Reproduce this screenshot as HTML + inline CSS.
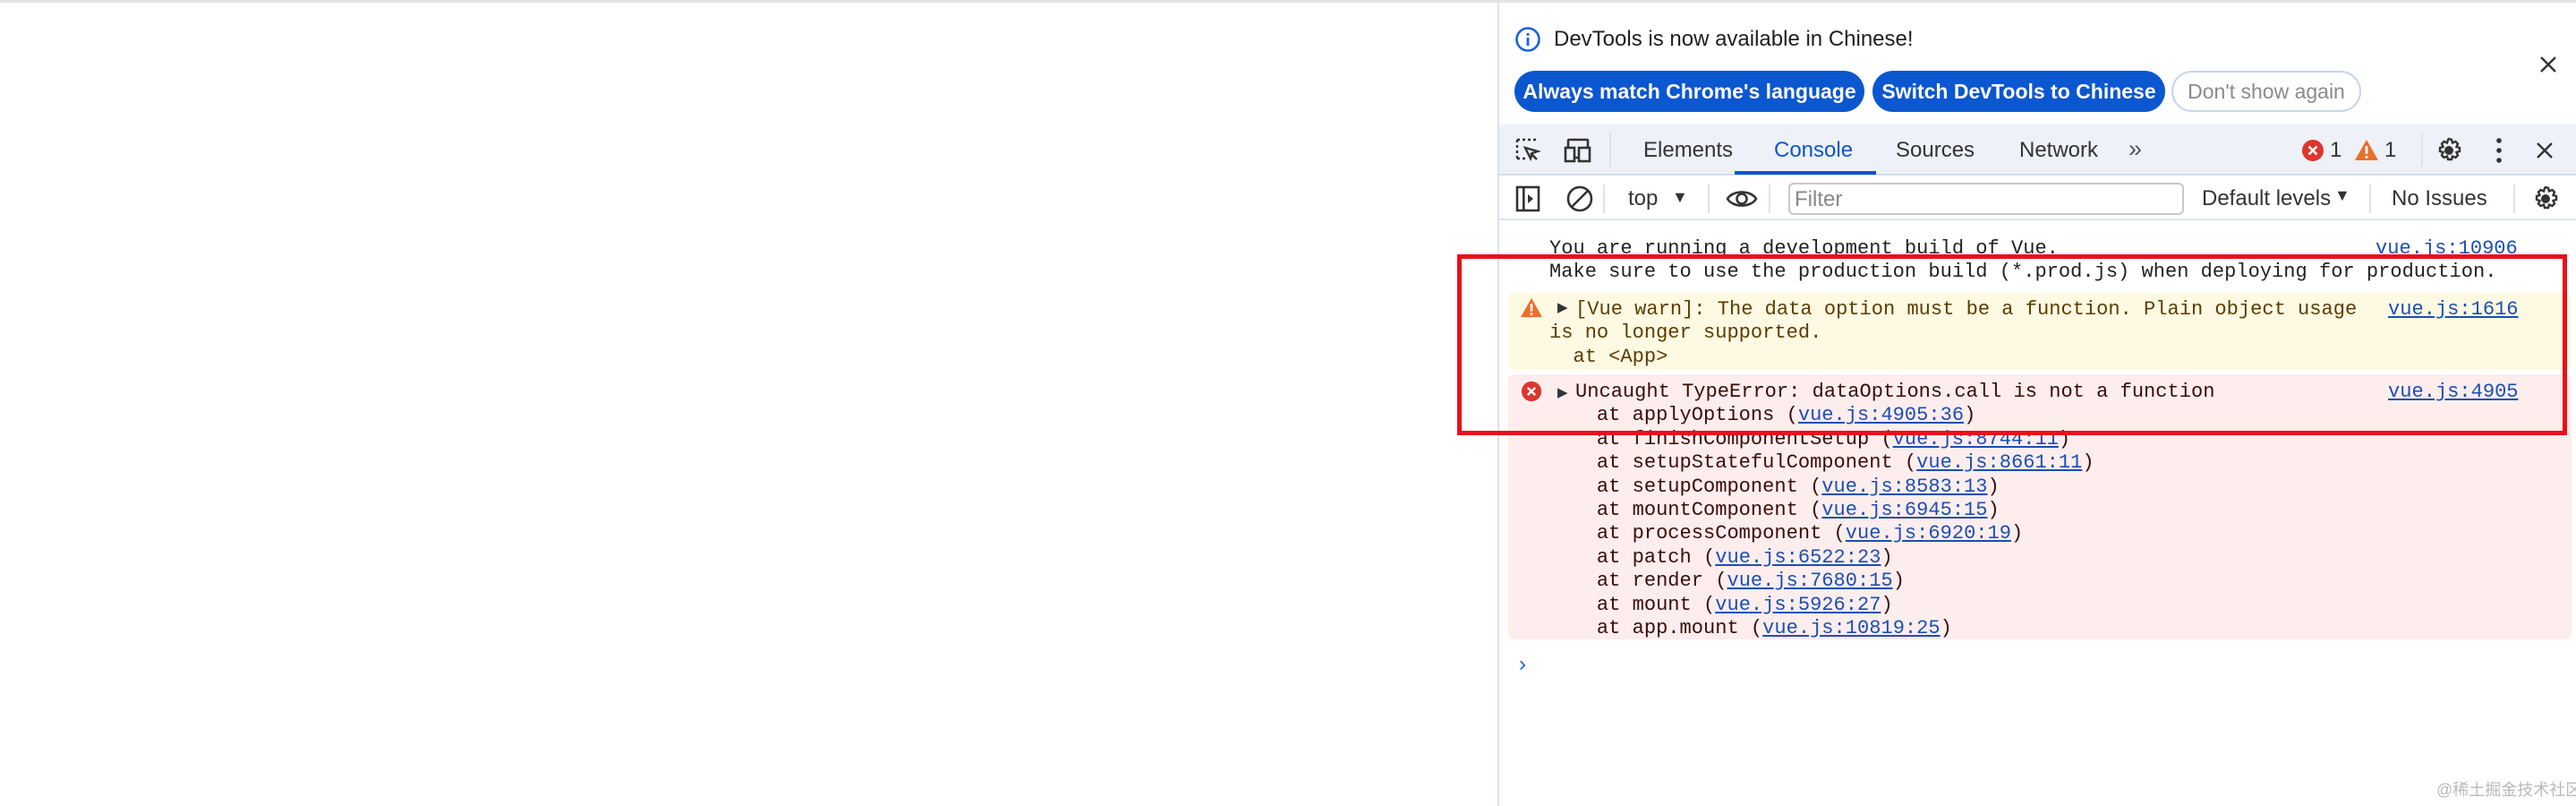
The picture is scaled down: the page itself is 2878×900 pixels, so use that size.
<!DOCTYPE html>
<html><head><meta charset="utf-8"><style>
*{margin:0;padding:0;box-sizing:border-box}
body{width:2878px;height:900px;background:#fff;position:relative;overflow:hidden;font-family:"Liberation Sans",sans-serif;color:#1f1f1f}
.a{position:absolute;white-space:nowrap}
.ui{font-size:24px}
.mono{font-family:"Liberation Mono",monospace;font-size:22.05px;line-height:26.4px}
.lnk{color:#1a4fb4;text-decoration:underline}
.btn{position:absolute;top:79px;height:46px;border-radius:23px;font-size:23px;font-weight:bold;color:#fff;background:#0b57d0;line-height:46px;text-align:center}
.div{position:absolute;width:2px;background:#dde1ea}
</style></head><body>
<div class="a" style="left:0;top:0;width:2878px;height:3px;background:#e4e4e4"></div>
<div class="a" style="left:1673px;top:0;width:2px;height:900px;background:#d6e2f5"></div>

<svg class="a" style="left:1692px;top:29px" width="30" height="30" viewBox="0 0 30 30"><circle cx="15" cy="15" r="12.5" fill="none" stroke="#1a63d8" stroke-width="2.6"/><rect x="13.6" y="13" width="2.8" height="9" fill="#1a63d8"/><rect x="13.6" y="8" width="2.8" height="2.8" fill="#1a63d8"/></svg>
<div class="a ui" style="left:1736px;top:30px;color:#1f1f1f">DevTools is now available in Chinese!</div>
<div class="btn" style="left:1692px;width:391px">Always match Chrome's language</div>
<div class="btn" style="left:2092px;width:327px">Switch DevTools to Chinese</div>
<div class="btn" style="left:2426px;width:212px;background:#fff;color:#8a8a8a;border:2px solid #c6d4ee;line-height:42px;font-weight:normal">Don't show again</div>
<svg class="a" style="left:2836px;top:61px" width="22" height="22" viewBox="0 0 22 22"><path d="M3 3L19 19M19 3L3 19" stroke="#333" stroke-width="2.4"/></svg>

<div class="a" style="left:1675px;top:139px;width:1203px;height:57px;background:#eef1f8;border-bottom:2px solid #d5dcea"></div>
<svg class="a" style="left:1692px;top:153px" width="30" height="30" viewBox="0 0 30 30"><path d="M3 3h3M9 3h3M15 3h3M21 3h3M3 3v3M3 9v3M3 15v3M3 21v3M3 24h3M9 24h3" stroke="#333" stroke-width="2.4" fill="none"/><path d="M12 12l14 4-6 2-2 6z M18 18l7 7" stroke="#333" stroke-width="2.4" fill="none"/></svg>
<svg class="a" style="left:1746px;top:153px" width="34" height="30" viewBox="0 0 34 30"><rect x="6" y="3" width="22" height="20" fill="none" stroke="#333" stroke-width="2.6" rx="1"/><rect x="3" y="12" width="10" height="15" fill="#eef1f8" stroke="#333" stroke-width="2.6"/><rect x="18" y="12" width="12" height="15" fill="#eef1f8" stroke="#333" stroke-width="2.6"/></svg>
<div class="div" style="left:1798px;top:148px;height:38px"></div>
<div class="a ui" style="left:1836px;top:154px;color:#333">Elements</div>
<div class="a ui" style="left:1982px;top:154px;color:#0b57d0">Console</div>
<div class="a" style="left:1938px;top:191px;width:158px;height:4px;background:#0b57d0"></div>
<div class="a ui" style="left:2118px;top:154px;color:#333">Sources</div>
<div class="a ui" style="left:2256px;top:154px;color:#333">Network</div>
<div class="a ui" style="left:2378px;top:151px;color:#555;font-size:27px">»</div>
<svg class="a" style="left:2571px;top:155px" width="26" height="26" viewBox="0 0 26 26"><circle cx="13" cy="13" r="12" fill="#dc362e"/><path d="M8.5 8.5l9 9M17.5 8.5l-9 9" stroke="#fff" stroke-width="2.6"/></svg>
<div class="a ui" style="left:2603px;top:154px;color:#333">1</div>
<svg class="a" style="left:2630px;top:154px" width="28" height="26" viewBox="0 0 28 26"><path d="M14 2L27 25H1z" fill="#e8702a"/><rect x="12.6" y="9" width="2.8" height="9" fill="#fff"/><rect x="12.6" y="20" width="2.8" height="2.8" fill="#fff"/></svg>
<div class="a ui" style="left:2664px;top:154px;color:#333">1</div>
<div class="div" style="left:2705px;top:148px;height:38px"></div>
<svg class="a" style="left:2720px;top:152px" width="32" height="32" viewBox="0 0 32 32"><path d="M16 3l3 1 1 3.5 3.5-1.5 2.5 2.5-1.5 3.5 3.5 1v4l-3.5 1 1.5 3.5-2.5 2.5-3.5-1.5-1 3.5h-4l-1-3.5-3.5 1.5-2.5-2.5 1.5-3.5-3.5-1v-4l3.5-1-1.5-3.5 2.5-2.5 3.5 1.5 1-3.5z" fill="none" stroke="#333" stroke-width="2.4"/><circle cx="16" cy="16" r="5" fill="#333"/></svg>
<svg class="a" style="left:2786px;top:152px" width="12" height="32" viewBox="0 0 12 32"><circle cx="6" cy="5" r="2.8" fill="#333"/><circle cx="6" cy="16" r="2.8" fill="#333"/><circle cx="6" cy="27" r="2.8" fill="#333"/></svg>
<svg class="a" style="left:2832px;top:157px" width="22" height="22" viewBox="0 0 22 22"><path d="M3 3L19 19M19 3L3 19" stroke="#333" stroke-width="2.4"/></svg>

<div class="a" style="left:1675px;top:244px;width:1203px;height:2px;background:#dde4f0"></div>
<svg class="a" style="left:1693px;top:207px" width="28" height="30" viewBox="0 0 28 30"><rect x="2" y="2" width="24" height="26" fill="none" stroke="#333" stroke-width="2.6"/><rect x="8" y="2" width="2.6" height="26" fill="#333"/><path d="M14 10l6 5-6 5z" fill="#333"/></svg>
<svg class="a" style="left:1749px;top:206px" width="32" height="32" viewBox="0 0 32 32"><circle cx="16" cy="16" r="13" fill="none" stroke="#333" stroke-width="2.6"/><path d="M7 25L25 7" stroke="#333" stroke-width="2.6"/></svg>
<div class="div" style="left:1791px;top:206px;height:32px"></div>
<div class="a ui" style="left:1819px;top:208px;color:#333">top</div>
<div class="a" style="left:1868px;top:210px;font-size:18px;color:#333">▼</div>
<div class="div" style="left:1908px;top:206px;height:32px"></div>
<svg class="a" style="left:1928px;top:208px" width="36" height="28" viewBox="0 0 36 28"><path d="M2 14C8 4 28 4 34 14C28 24 8 24 2 14z" fill="none" stroke="#333" stroke-width="2.6"/><circle cx="18" cy="14" r="5.5" fill="none" stroke="#333" stroke-width="2.6"/></svg>
<div class="div" style="left:1976px;top:206px;height:32px"></div>
<div class="a" style="left:1998px;top:204px;width:442px;height:36px;border:2px solid #c8c8c8;border-radius:6px"></div>
<div class="a ui" style="left:2005px;top:209px;color:#888">Filter</div>
<div class="a ui" style="left:2460px;top:208px;color:#333">Default levels</div>
<div class="a" style="left:2608px;top:208px;font-size:18px;color:#333">▼</div>
<div class="div" style="left:2647px;top:206px;height:32px"></div>
<div class="a ui" style="left:2672px;top:208px;color:#333">No Issues</div>
<div class="div" style="left:2808px;top:206px;height:32px"></div>
<svg class="a" style="left:2828px;top:206px" width="32" height="32" viewBox="0 0 32 32"><path d="M16 3l3 1 1 3.5 3.5-1.5 2.5 2.5-1.5 3.5 3.5 1v4l-3.5 1 1.5 3.5-2.5 2.5-3.5-1.5-1 3.5h-4l-1-3.5-3.5 1.5-2.5-2.5 1.5-3.5-3.5-1v-4l3.5-1-1.5-3.5 2.5-2.5 3.5 1.5 1-3.5z" fill="none" stroke="#333" stroke-width="2.4"/><circle cx="16" cy="16" r="5" fill="#333"/></svg>

<div class="a mono" style="left:1731px;top:265px;color:#222">You are running a development build of Vue.<br>Make sure to use the production build (*.prod.js) when deploying for production.</div>
<div class="a mono lnk" style="left:2654px;top:265px">vue.js:10906</div>

<div class="a" style="left:1685px;top:327px;width:1188px;height:86px;background:#fef9e3;border-radius:6px"></div>
<svg class="a" style="left:1698px;top:331px" width="26" height="24" viewBox="0 0 28 26"><path d="M14 2L27 25H1z" fill="#e8702a"/><rect x="12.6" y="9" width="2.8" height="9" fill="#fff"/><rect x="12.6" y="20" width="2.8" height="2.8" fill="#fff"/></svg>
<div class="a mono" style="left:1740px;top:332px;font-size:15px;color:#333">▶</div>
<div class="a mono" style="left:1731px;top:333px;color:#5c3c00"><span style="padding-left:29px">[Vue warn]: The data option must be a function. Plain object usage</span><br>is no longer supported.<br>&nbsp;&nbsp;at &lt;App&gt;</div>
<div class="a mono lnk" style="left:2668px;top:333px">vue.js:1616</div>

<div class="a" style="left:1685px;top:418px;width:1188px;height:296px;background:#fdeded;border-radius:6px"></div>
<svg class="a" style="left:1699px;top:425px" width="24" height="24" viewBox="0 0 26 26"><circle cx="13" cy="13" r="12" fill="#dc362e"/><path d="M8.5 8.5l9 9M17.5 8.5l-9 9" stroke="#fff" stroke-width="2.6"/></svg>
<div class="a mono" style="left:1740px;top:427px;font-size:15px;color:#333">▶</div>
<div class="a mono" style="left:1731px;top:425px;color:#3b0b0b"><span style="padding-left:29px">Uncaught TypeError: dataOptions.call is not a function</span><br>
&nbsp;&nbsp;&nbsp;&nbsp;at applyOptions (<span class="lnk">vue.js:4905:36</span>)<br>
&nbsp;&nbsp;&nbsp;&nbsp;at finishComponentSetup (<span class="lnk">vue.js:8744:11</span>)<br>
&nbsp;&nbsp;&nbsp;&nbsp;at setupStatefulComponent (<span class="lnk">vue.js:8661:11</span>)<br>
&nbsp;&nbsp;&nbsp;&nbsp;at setupComponent (<span class="lnk">vue.js:8583:13</span>)<br>
&nbsp;&nbsp;&nbsp;&nbsp;at mountComponent (<span class="lnk">vue.js:6945:15</span>)<br>
&nbsp;&nbsp;&nbsp;&nbsp;at processComponent (<span class="lnk">vue.js:6920:19</span>)<br>
&nbsp;&nbsp;&nbsp;&nbsp;at patch (<span class="lnk">vue.js:6522:23</span>)<br>
&nbsp;&nbsp;&nbsp;&nbsp;at render (<span class="lnk">vue.js:7680:15</span>)<br>
&nbsp;&nbsp;&nbsp;&nbsp;at mount (<span class="lnk">vue.js:5926:27</span>)<br>
&nbsp;&nbsp;&nbsp;&nbsp;at app.mount (<span class="lnk">vue.js:10819:25</span>)</div>
<div class="a mono lnk" style="left:2668px;top:425px">vue.js:4905</div>

<div class="a" style="left:1697px;top:728px;font-size:24px;color:#1a63d8">›</div>

<div class="a" style="left:1628px;top:284px;width:1240px;height:202px;border:5px solid #e8101a"></div>

<div class="a" style="left:2722px;top:868px;font-size:18px;color:#b9b9b9;font-family:'Liberation Sans','Noto Sans CJK SC',sans-serif">@稀土掘金技术社区</div>
</body></html>
